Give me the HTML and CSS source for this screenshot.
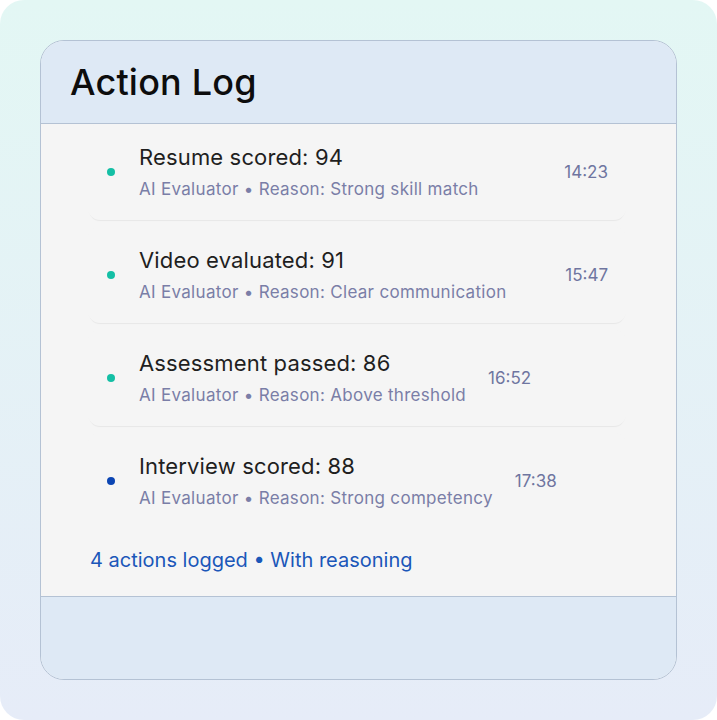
FILE: index.html
```html
<!DOCTYPE html>
<html lang="en">
<head>
    <meta charset="UTF-8">
    <meta name="viewport" content="width=device-width, initial-scale=1.0">
    <title>Action Log</title>
    <link rel="stylesheet" href="styles.css">
</head>
<body>
    <div class="page">
        <div class="panel">
            <div class="panel-head">
                <h1>Action Log</h1>
            </div>
            <div class="panel-body">
                <ul class="log">
                    <li class="item">
                        <span class="dot"></span>
                        <div class="text">
                            <div class="title">Resume scored: 94</div>
                            <div class="meta">AI Evaluator • Reason: Strong skill match</div>
                        </div>
                        <span class="time">14:23</span>
                    </li>
                    <li class="item">
                        <span class="dot"></span>
                        <div class="text">
                            <div class="title">Video evaluated: 91</div>
                            <div class="meta">AI Evaluator • Reason: Clear communication</div>
                        </div>
                        <span class="time">15:47</span>
                    </li>
                    <li class="item item--new">
                        <span class="dot"></span>
                        <div class="text">
                            <div class="title">Assessment passed: 86</div>
                            <div class="meta">AI Evaluator • Reason: Above threshold</div>
                        </div>
                        <span class="time">16:52</span>
                    </li>
                    <li class="item item--new item--last">
                        <span class="dot"></span>
                        <div class="text">
                            <div class="title">Interview scored: 88</div>
                            <div class="meta">AI Evaluator • Reason: Strong competency</div>
                        </div>
                        <span class="time">17:38</span>
                    </li>
                </ul>
                <p class="summary">4 actions logged • With reasoning</p>
            </div>
            <div class="panel-foot"></div>
        </div>
    </div>
</body>
</html>
```

FILE: styles.css
```css
body {
    margin: 0;
    background: #ffffff;
    font-family: Inter, "Noto Sans", sans-serif;
}
.page {
    width: 717px;
    height: 720px;
    box-sizing: border-box;
    padding: 40px;
    border-radius: 24px;
    background: linear-gradient(180deg, #e3f7f4 0%, #e6ecf8 100%);
}
.panel {
    border: 1px solid #b4c2d4;
    border-radius: 24px;
    overflow: hidden;
    background: #f5f5f5;
}
.panel-head {
    height: 82px;
    background: #dee9f5;
    border-bottom: 1px solid #b4c2d4;
    display: flex;
    align-items: center;
    padding-left: 29px;
}
h1 {
    margin: 0;
    font-size: 36px;
    font-weight: 500;
    color: #0d0d0d;
    letter-spacing: 0.2px;
}
.panel-body {
    padding: 0 50px 22px 47px;
}
.log {
    list-style: none;
    margin: 0;
    padding: 0;
    display: flex;
    flex-direction: column;
    gap: 7px;
}
.item {
    height: 96px;
    box-sizing: border-box;
    display: flex;
    align-items: center;
    padding: 0 18px 0 19px;
    border-radius: 12px;
    background: #f5f5f5;
    box-shadow: 0 2px 1px -1px rgba(0, 0, 0, 0.06);
}
.item--last {
    box-shadow: none;
}
.dot {
    width: 8px;
    height: 8px;
    border-radius: 50%;
    background: #14bfa5;
    flex-shrink: 0;
    margin-right: 24px;
}
.item--last .dot {
    background: #0b45b3;
}
.text {
    display: flex;
    flex-direction: column;
    gap: 8px;
}
.title {
    font-size: 22px;
    line-height: 26px;
    letter-spacing: 0.15px;
    color: #1f1f1f;
}
.meta {
    font-size: 17px;
    line-height: 22px;
    letter-spacing: 0.3px;
    color: #7a7ea7;
}
.time {
    margin-left: auto;
    font-size: 17px;
    color: #6f75a0;
}
.item--new .time {
    margin-left: 22px;
}
.summary {
    margin: 17px 0 0 2px;
    font-size: 20px;
    line-height: 28px;
    color: #1b57b9;
}
.panel-foot {
    height: 82px;
    background: #dee9f5;
    border-top: 1px solid #b4c2d4;
}
```
